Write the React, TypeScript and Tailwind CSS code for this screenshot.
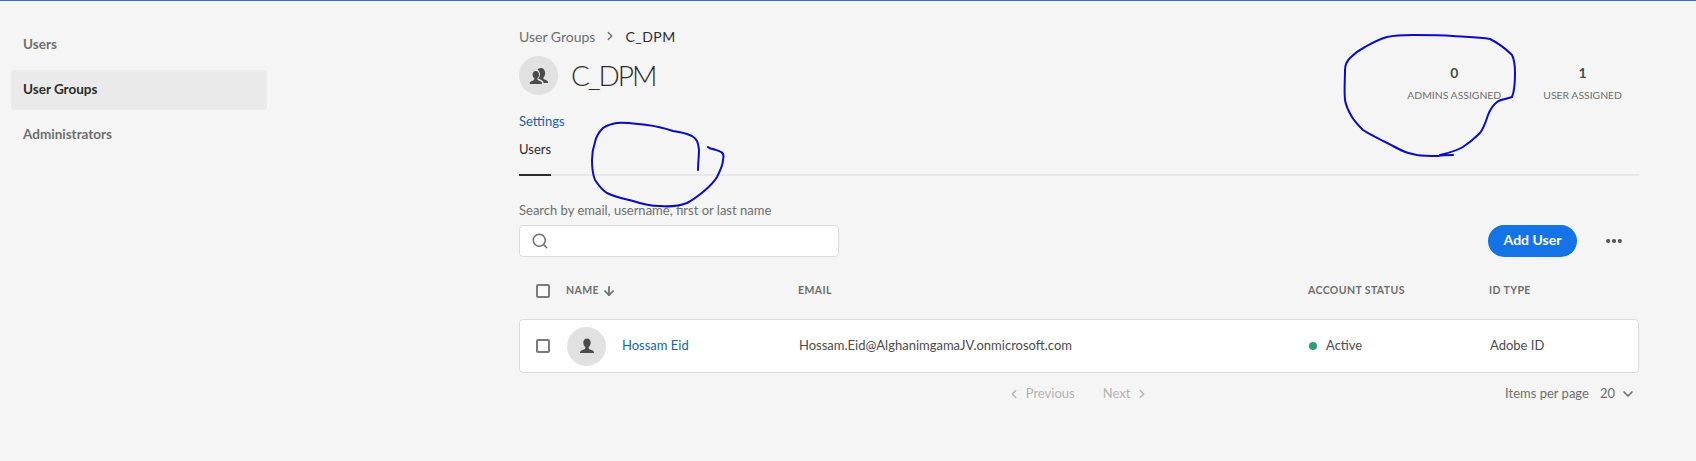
import React from 'react';
import { ChevronLeft, ChevronRight, ChevronDown, ArrowDown, Search, MoreHorizontal } from 'lucide-react';

function Box() {
  return <span className="block w-[14px] h-[14px] border-2 border-[#7a7a7a] rounded-[2px] bg-white/40" />;
}

function PersonIcon() {
  return (
    <svg viewBox="0 0 18 18" className="w-[18px] h-[18px]" fill="#4b4b4b">
      <path d="M9 1.500c-2.400 0-3.700 1.900-3.700 4.100 0 1.900.9 3.600 2 4.500v1.200c0 .5-.3.8-.8 1-1.900.7-3.700 1.400-4.200 2.200-.2.4-.3 1-.3 1.500h14c0-.5-.1-1.100-.3-1.500-.5-.8-2.300-1.500-4.200-2.200-.5-.2-.8-.5-.8-1v-1.200c1.100-.9 2-2.600 2-4.500 0-2.200-1.300-4.100-3.700-4.100z" />
    </svg>
  );
}

function GroupIcon() {
  return (
    <svg viewBox="0 0 20 18" className="w-[20px] h-[18px]" fill="#4b4b4b">
      <path d="M11.500 1c-1.300 0-2.300.7-2.900 1.800 1.500.9 2.400 2.600 2.400 4.500 0 1.600-.6 3.100-1.600 4.100.1.300.3.500.7.700 2 .8 3.600 1.600 4.200 2.700.2.300.3.700.3 1.200H19c0-.7-.1-1.300-.3-1.700-.5-.8-2-1.400-3.600-2-.5-.2-.7-.5-.7-.9v-1c1-.8 1.700-2.200 1.700-3.900C16.100 2.700 14.200 1 11.500 1z" />
      <path d="M6.800 4c-2 0-3.200 1.600-3.200 3.500 0 1.600.8 3 1.700 3.800v1c0 .4-.3.700-.7.900-1.600.6-3.200 1.200-3.600 2-.2.300-.3 1-.3 1.800H13c0-.8-.1-1.500-.3-1.800-.4-.8-2-1.400-3.600-2-.4-.2-.7-.5-.7-.9v-1c.9-.8 1.700-2.200 1.700-3.800C10 5.600 8.800 4 6.800 4z" />
    </svg>
  );
}

export default function App() {
  return (
    <div className="relative w-[1696px] h-[461px] overflow-hidden bg-[#f5f5f5] font-['Lato',sans-serif] text-[#4b4b4b]">
      <div className="h-px bg-[#2a73c5]" />
      <div className="flex">
        <aside className="w-[519px] pl-[11px] pt-[24px] shrink-0">
          <nav className="w-[256px] flex flex-col gap-[5px] text-[13.5px] font-bold">
            <a className="h-[40px] flex items-center px-[12px] pb-[1px] text-[#6e6e6e]">Users</a>
            <a className="h-[40px] flex items-center px-[12px] pb-[1px] text-[#2c2c2c] bg-[#eaeaea] rounded-[4px]">User Groups</a>
            <a className="h-[40px] flex items-center px-[12px] pb-[1px] text-[#6e6e6e]">Administrators</a>
          </nav>
        </aside>

        <main className="w-[1120px] pt-[25px]">
          <div className="flex justify-between">
            <div>
              <div className="h-[20px] flex items-center text-[14px] text-[#6e6e6e]">
                User Groups
                <ChevronRight className="w-[14px] h-[14px] mx-[8px]" strokeWidth={2.5} />
                <span className="text-[#2c2c2c] tracking-[0.5px]">C_DPM</span>
              </div>
              <div className="flex items-center gap-[13px] mt-[10px]">
                <span className="w-[39px] h-[39px] rounded-full bg-[#e1e1e1] flex items-center justify-center">
                  <GroupIcon />
                </span>
                <h1 className="text-[28px] font-light tracking-[-2px] text-[#2c2c2c] leading-[39px]">C_DPM</h1>
              </div>
            </div>
            <div className="flex pt-[37px] pr-[17px] gap-[42px] text-center">
              <div>
                <div className="text-[14px] font-bold leading-[20px]">0</div>
                <div className="text-[10.4px] leading-[16px] mt-[4px] text-[#6e6e6e]">ADMINS ASSIGNED</div>
              </div>
              <div>
                <div className="text-[14px] font-bold leading-[20px]">1</div>
                <div className="text-[10.4px] leading-[16px] mt-[4px] text-[#6e6e6e]">USER ASSIGNED</div>
              </div>
            </div>
          </div>

          <a className="block mt-[8px] text-[13px] leading-[20px] text-[#1a5fb4]">Settings</a>
          <div className="border-b-2 border-[#e8e8e8] mt-[8px] h-[37px]">
            <div className="w-fit h-[37px] border-b-2 border-[#2c2c2c] text-[13px] leading-[20px] text-[#2c2c2c]">Users</div>
          </div>

          <label className="block mt-[24px] text-[13px] leading-[20px] text-[#6e6e6e]">Search by email, username, first or last name</label>
          <div className="flex items-center justify-between mt-[5px]">
            <div className="w-[320px] h-[32px] bg-white border border-[#dcdcdc] rounded-[4px] flex items-center pl-[11px]">
              <Search className="w-[18px] h-[18px] text-[#6e6e6e]" />
            </div>
            <div className="flex items-center">
              <button className="w-[89px] h-[32px] rounded-full bg-[#1473e6] text-white text-[14px] font-bold pb-[3px]">Add User</button>
              <MoreHorizontal className="w-[20px] h-[20px] ml-[27px] mr-[15px] text-[#4b4b4b]" strokeWidth={3} />
            </div>
          </div>

          <div className="grid grid-cols-[47px_232px_510px_181px_1fr] items-center h-[48px] mt-[10px] text-[10.5px] font-bold tracking-[0.4px] text-[#6e6e6e]">
            <span className="pl-[17px]"><Box /></span>
            <span className="flex items-center gap-[3px]">NAME <ArrowDown className="w-[14px] h-[14px]" strokeWidth={3} /></span>
            <span>EMAIL</span>
            <span>ACCOUNT STATUS</span>
            <span>ID TYPE</span>
          </div>

          <div className="grid grid-cols-[47px_232px_510px_181px_1fr] items-center h-[54px] mt-[4px] bg-white border border-[#dcdcdc] rounded-[4px] text-[13px]">
            <span className="pl-[16px]"><Box /></span>
            <span className="flex items-center gap-[16px]">
              <span className="w-[39px] h-[39px] rounded-full bg-[#e1e1e1] flex items-center justify-center"><PersonIcon /></span>
              <a className="text-[#1a5fb4]">Hossam Eid</a>
            </span>
            <span className="text-[#4b4b4b]">Hossam.Eid@AlghanimgamaJV.onmicrosoft.com</span>
            <span className="flex items-center gap-[9px]">
              <span className="w-[8px] h-[8px] rounded-full bg-[#2d9d78]" />Active
            </span>
            <span>Adobe ID</span>
          </div>

          <div className="relative flex justify-center items-center h-[20px] mt-[11px] text-[13px]">
            <div className="flex items-center text-[#b3b3b3] ml-[-2px]">
              <ChevronLeft className="w-[14px] h-[14px] mr-[5px]" strokeWidth={2.5} />
              Previous
              <span className="ml-[28px]">Next</span>
              <ChevronRight className="w-[14px] h-[14px] ml-[5px]" strokeWidth={2.5} />
            </div>
            <div className="absolute right-[3px] flex items-center text-[#6e6e6e]">
              Items per page
              <span className="ml-[11px]">20</span>
              <ChevronDown className="w-[16px] h-[16px] ml-[5px]" strokeWidth={2.5} />
            </div>
          </div>
        </main>
      </div>

      {/* pen marks drawn over the screenshot */}
      <svg className="absolute left-0 top-0 w-[1696px] h-[461px] pointer-events-none" viewBox="0 0 1696 461" fill="none" stroke="#0a0acb" strokeWidth="2" strokeLinecap="round" strokeLinejoin="round">
        <path d="M698 170C698 163 699 156 699 150C698 142 697 139 692 136C686 133 680 132 673 131C664 128 656 126 647 125C636 124 626 122 617 123C610 124 606 126 603 128C598 133 596 137 595 142C593 148 592 154 592 160C592 168 593 175 595 180C599 186 602 190 607 193C615 197 625 199 633 201C642 204 651 206 660 206C670 207 679 206 687 203C693 200 698 196 703 192C709 187 714 182 717 177C720 171 723 165 723 160C724 156 723 153 721 152C718 150 715 150 713 149C711 149 709 148 708 147" />
        <path d="M1453 155C1448 155 1443 155 1438 156C1431 156 1424 156 1417 155C1412 154 1407 153 1403 151C1396 148 1390 144 1383 141C1376 137 1369 134 1363 130C1359 126 1355 122 1352 117C1349 112 1346 106 1345 100C1344 90 1345 80 1345 70C1345 65 1347 61 1350 58C1354 54 1359 50 1365 47C1372 43 1380 39 1387 37C1396 35 1404 35 1413 35C1426 35 1440 35 1453 36C1466 37 1478 37 1490 39C1498 43 1506 49 1512 55C1515 61 1515 67 1515 73C1515 81 1515 90 1512 97C1507 99 1501 99 1497 102C1492 106 1490 110 1488 115C1486 121 1484 128 1480 133C1475 138 1469 143 1463 147C1456 151 1448 153 1440 155" />
      </svg>
    </div>
  );
}
